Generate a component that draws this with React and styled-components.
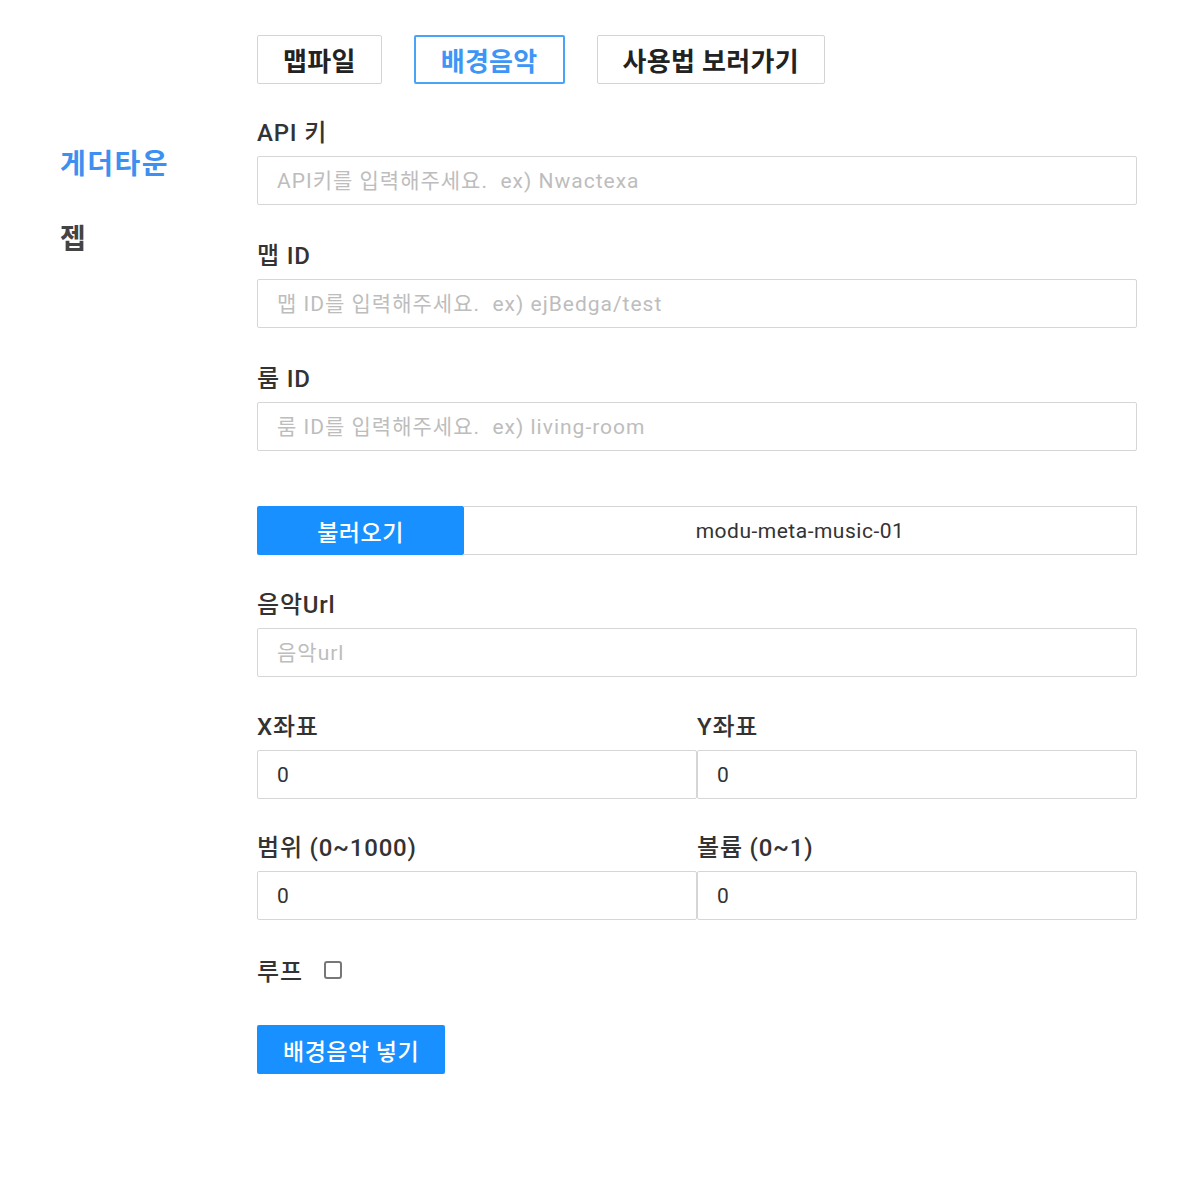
import React from "react"
import styled, { createGlobalStyle } from "styled-components"

const GlobalStyle = createGlobalStyle`
  body {
    margin: 0;
    background: #fff;
    font-family: Roboto, "Noto Sans CJK KR", sans-serif;
    color: #333;
  }
`

const Page = styled.div`
  display: flex;
  min-height: 1181px;
`

const Sidebar = styled.nav`
  width: 197px;
  padding: 146px 0 0 60px;
  display: flex;
  flex-direction: column;
  gap: 37px;
`

const SideItem = styled.div`
  font-size: 28px;
  font-weight: 700;
  line-height: 38px;
  letter-spacing: 1.5px;
  color: ${(p) => (p.$active ? "#3d8ff0" : "#444")};
`

const Main = styled.main`
  width: 880px;
  padding-top: 35px;
  display: flex;
  flex-direction: column;
`

const Tabs = styled.div`
  display: flex;
  gap: 32px;
  margin-bottom: 34px;
`

const Tab = styled.button`
  height: 49px;
  padding: 0 25px;
  background: #fff;
  border: ${(p) => (p.$active ? "2px solid #4aa3f7" : "1px solid #d4d4d4")};
  border-radius: 2px;
  font-family: inherit;
  font-size: 26px;
  font-weight: 600;
  letter-spacing: 0.3px;
  color: ${(p) => (p.$active ? "#3d95f5" : "#222")};
  cursor: pointer;
`

const Field = styled.div`
  display: flex;
  flex-direction: column;
  margin-bottom: ${(p) => p.$gap || 36}px;
`

const Label = styled.label`
  font-size: 24px;
  font-weight: 500;
  line-height: 30px;
  letter-spacing: 0.8px;
  margin-bottom: 8px;
  color: #333;
`

const Input = styled.input`
  box-sizing: border-box;
  width: 100%;
  height: 49px;
  padding: 0 19px;
  border: 1px solid #d6d6d6;
  border-radius: 2px;
  font-family: inherit;
  font-size: 21px;
  letter-spacing: 1px;
  color: #333;
  outline: none;
  &::placeholder {
    color: #bdbdbd;
  }
`

const LoadRow = styled.div`
  display: flex;
  height: 49px;
  margin-bottom: 35px;
`

const PrimaryButton = styled.button`
  height: 49px;
  padding: 0 ${(p) => p.$pad || 26}px;
  width: ${(p) => (p.$width ? `${p.$width}px` : "auto")};
  background: #1890ff;
  color: #fff;
  border: none;
  border-radius: 2px;
  font-family: inherit;
  font-size: 23px;
  font-weight: 500;
  letter-spacing: 0.5px;
  cursor: pointer;
  flex-shrink: 0;
`

const RoomBox = styled.div`
  flex: 1;
  display: flex;
  align-items: center;
  justify-content: center;
  border: 1px solid #d6d6d6;
  border-left: none;
  font-size: 21px;
  letter-spacing: 0.5px;
  color: #333;
`

const Pair = styled.div`
  display: grid;
  grid-template-columns: 440px 440px;
  margin-bottom: 34px;
`

const Column = styled.div`
  display: flex;
  flex-direction: column;
`

const CheckRow = styled.div`
  display: flex;
  align-items: center;
  gap: 21px;
  height: 30px;
  margin-bottom: 41px;
`

const CheckLabel = styled.span`
  font-size: 24px;
  font-weight: 500;
  letter-spacing: 0.8px;
  color: #333;
`

const Check = styled.input`
  width: 18px;
  height: 18px;
  margin: 2px 0 0;
  appearance: none;
  border: 2px solid #777;
  border-radius: 3px;
  background: #fff;
`

const App = () => {
  return (
    <Page>
      <GlobalStyle />
      <Sidebar>
        <SideItem $active>게더타운</SideItem>
        <SideItem>젭</SideItem>
      </Sidebar>
      <Main>
        <Tabs>
          <Tab>맵파일</Tab>
          <Tab $active>배경음악</Tab>
          <Tab>사용법 보러가기</Tab>
        </Tabs>
        <Field>
          <Label>API 키</Label>
          <Input placeholder="API키를 입력해주세요.  ex) Nwactexa" />
        </Field>
        <Field>
          <Label>맵 ID</Label>
          <Input placeholder="맵 ID를 입력해주세요.  ex) ejBedga/test" />
        </Field>
        <Field $gap={55}>
          <Label>룸 ID</Label>
          <Input placeholder="룸 ID를 입력해주세요.  ex) living-room" />
        </Field>
        <LoadRow>
          <PrimaryButton $width={207}>불러오기</PrimaryButton>
          <RoomBox>modu-meta-music-01</RoomBox>
        </LoadRow>
        <Field $gap={35}>
          <Label>음악Url</Label>
          <Input placeholder="음악url" />
        </Field>
        <Pair>
          <Column>
            <Label>X좌표</Label>
            <Input defaultValue="0" />
          </Column>
          <Column>
            <Label>Y좌표</Label>
            <Input defaultValue="0" />
          </Column>
        </Pair>
        <Pair>
          <Column>
            <Label>범위 (0~1000)</Label>
            <Input defaultValue="0" />
          </Column>
          <Column>
            <Label>볼륨 (0~1)</Label>
            <Input defaultValue="0" />
          </Column>
        </Pair>
        <CheckRow>
          <CheckLabel>루프</CheckLabel>
          <Check type="checkbox" />
        </CheckRow>
        <div>
          <PrimaryButton>배경음악 넣기</PrimaryButton>
        </div>
      </Main>
    </Page>
  )
}

export default App
